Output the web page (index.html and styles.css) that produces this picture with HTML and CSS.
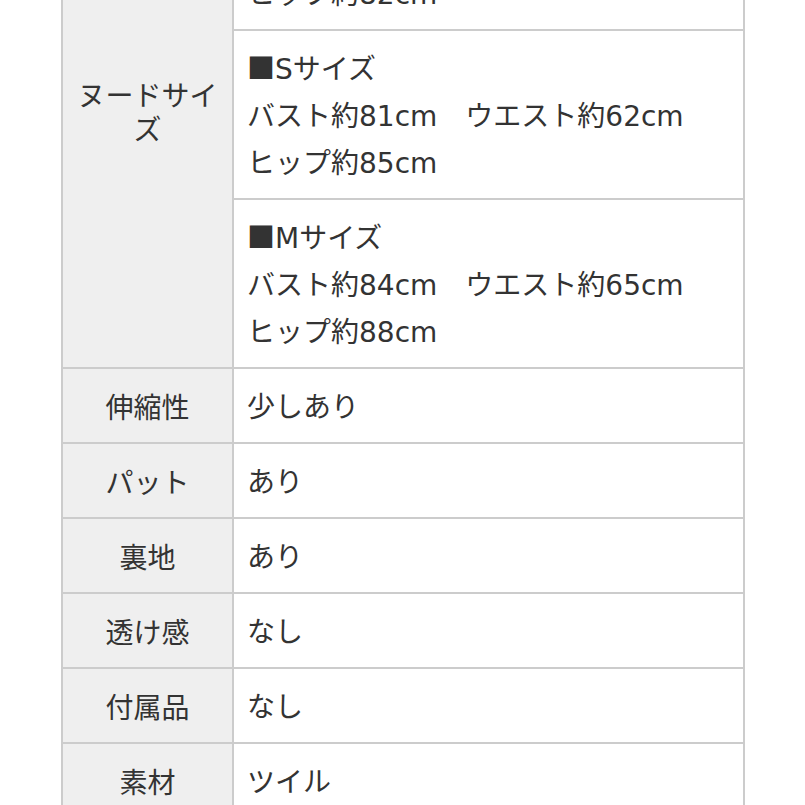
FILE: index.html
```html
<!DOCTYPE html>
<html lang="ja">
<head>
<meta charset="utf-8">
<link rel="stylesheet" href="styles.css">
</head>
<body>
<table class="spec">
  <tr>
    <th rowspan="3" class="multi">ヌードサイズ</th>
    <td>■<span class="lat">XS</span>サイズ<br>バスト約<span class="lat">78cm</span>　ウエスト約<span class="lat">59cm</span><br>ヒップ約<span class="lat">82cm</span></td>
  </tr>
  <tr>
    <td>■<span class="lat">S</span>サイズ<br>バスト約<span class="lat">81cm</span>　ウエスト約<span class="lat">62cm</span><br>ヒップ約<span class="lat">85cm</span></td>
  </tr>
  <tr>
    <td>■<span class="lat">M</span>サイズ<br>バスト約<span class="lat">84cm</span>　ウエスト約<span class="lat">65cm</span><br>ヒップ約<span class="lat">88cm</span></td>
  </tr>
  <tr><th>伸縮性</th><td>少しあり</td></tr>
  <tr><th>パット</th><td>あり</td></tr>
  <tr><th>裏地</th><td>あり</td></tr>
  <tr><th>透け感</th><td>なし</td></tr>
  <tr><th>付属品</th><td>なし</td></tr>
  <tr><th>素材</th><td>ツイル</td></tr>
</table>
</body>
</html>
```

FILE: styles.css
```css
html, body {
  margin: 0;
  padding: 0;
  background: #ffffff;
}
body {
  font-family: "Noto Sans CJK JP", "Noto Sans", sans-serif;
  color: #333333;
  font-size: 28px;
}
.spec {
  border-collapse: collapse;
  margin-top: -140px;
  margin-left: 61px;
  width: 684px;
}
.spec th,
.spec td {
  border: 2px solid #cccccc;
  vertical-align: middle;
}
.spec th {
  width: 145px;
  padding: 13px 12px;
  background: #efefef;
  font-weight: normal;
  text-align: center;
  line-height: 34px;
}
.spec th.multi {
  padding-bottom: 20px;
}
.spec td {
  padding: 13px 13px;
  line-height: 47px;
  text-align: left;
  background: #ffffff;
}
.lat {
  font-family: "DejaVu Sans", sans-serif;
  line-height: 1;
}
```
